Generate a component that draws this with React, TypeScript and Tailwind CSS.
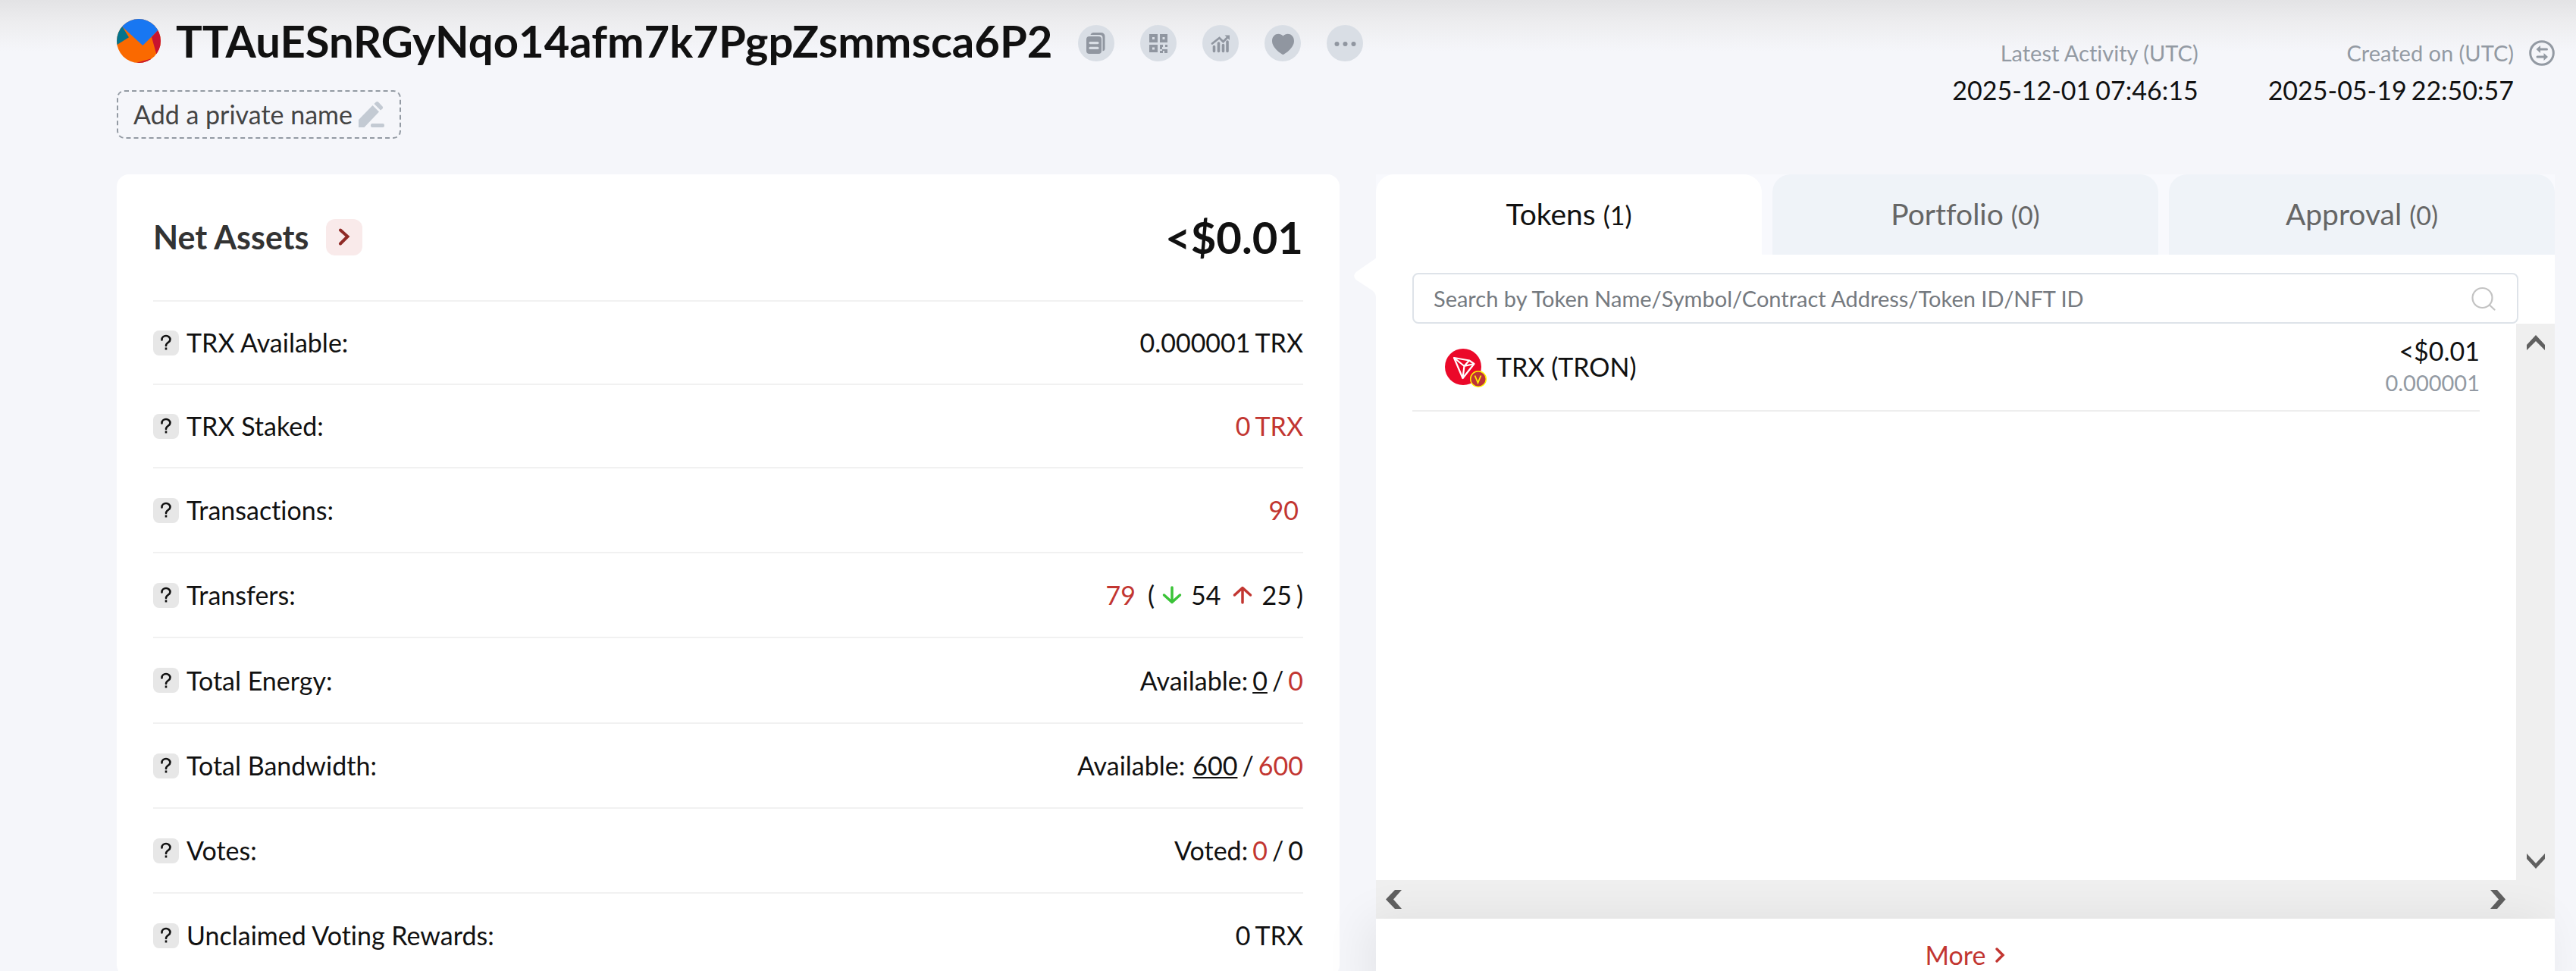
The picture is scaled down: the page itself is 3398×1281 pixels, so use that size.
import { useState } from 'react';
import type { ReactNode } from 'react';

const ADDRESS = 'TTAuESnRGyNqo14afm7k7PgpZsmmsca6P2';

const TABS = [
  { key: 'tokens', label: 'Tokens', count: 1 },
  { key: 'portfolio', label: 'Portfolio', count: 0 },
  { key: 'approval', label: 'Approval', count: 0 },
];

export default function App() {
  return (
    <div className="h-screen overflow-hidden bg-[#f5f6fa] bg-[linear-gradient(180deg,#e3e3e5_0px,#ededef_30px,#f5f6fa_68px)] pr-7 pl-[154px] font-['Lato',sans-serif] text-[34px] leading-[48px] text-[#111] [font-variant-ligatures:none]">
      <header className="flex h-[230px] items-start justify-between">
        <div className="pt-[25px]">
          <div className="flex h-[58px] items-center">
            <Avatar />
            <h1 className="ml-5 text-[58px] leading-[58px] font-bold">{ADDRESS}</h1>
            <div className="mt-1.5 ml-[34px] flex gap-[34px]">
              <IconButton label="Copy address"><CopyIcon /></IconButton>
              <IconButton label="QR code"><QrIcon /></IconButton>
              <IconButton label="Analysis"><ChartIcon /></IconButton>
              <IconButton label="Favorite"><HeartIcon /></IconButton>
              <IconButton label="More actions"><DotsIcon /></IconButton>
            </div>
          </div>
          <button
            type="button"
            className="mt-9 flex h-16 items-center gap-2 rounded-[10px] border-2 border-dashed border-[#939aa3] px-5 text-[#444]"
          >
            Add a private name
            <PencilIcon />
          </button>
        </div>

        <dl className="flex pt-[45px] text-right leading-[49px]">
          <div>
            <dt className="text-[29px] text-[#939aa3]">Latest Activity (UTC)</dt>
            <DateTime date="2025-12-01" time="07:46:15" />
          </div>
          <div className="ml-[92px]">
            <dt className="text-[29px] text-[#939aa3]">Created on (UTC)</dt>
            <DateTime date="2025-05-19" time="22:50:57" />
          </div>
          <dd className="ml-5 flex h-[49px] items-center">
            <button type="button" aria-label="Switch time zone">
              <SwapIcon />
            </button>
          </dd>
        </dl>
      </header>

      <main className="grid grid-cols-[1613fr_1555fr] items-start gap-12">
        <NetAssets />
        <TokenPanel />
      </main>
    </div>
  );
}

function DateTime({ date, time }: { date: string; time: string }) {
  return (
    <dd className="flex justify-end gap-1.5">
      <span>{date}</span>
      <span>{time}</span>
    </dd>
  );
}

function NetAssets() {
  return (
    <section className="rounded-2xl bg-white px-12">
      <div className="flex h-[166px] items-center justify-between">
        <div className="flex items-center">
          <h2 className="text-[43px] leading-[52px] font-bold text-[#333]">Net Assets</h2>
          <button
            type="button"
            aria-label="Show net assets"
            className="ml-[22px] grid size-12 place-items-center rounded-xl bg-[#f9eaea]"
          >
            <svg width="16" height="24" viewBox="0 0 16 24" fill="none" stroke="#8f2a26" strokeWidth="4" strokeLinecap="round">
              <path d="M3 2.500 12.500 11 3 20.500" />
            </svg>
          </button>
        </div>
        <span className="text-[58px] leading-[58px] font-bold">&lt;$0.01</span>
      </div>

      <Row label="TRX Available:" className="h-[110px]">
        <span>0.000001</span>
        <span>TRX</span>
      </Row>
      <Row label="TRX Staked:" className="h-[110px]">
        <a href="#" className="flex gap-1.5 text-[#c23631]">
          <span>0</span>
          <span>TRX</span>
        </a>
      </Row>
      <Row label="Transactions:" className="h-28">
        <Red>90</Red>
        <span />
      </Row>
      <Row label="Transfers:" className="h-28">
        <Red>79</Red>
        <span className="ml-2.5">(</span>
        <ArrowIcon className="ml-1 text-[#3bc338]" d="M13 2v19M2.500 12 13 21.500 23.500 12" />
        <span className="ml-1.5">54</span>
        <ArrowIcon className="ml-2.5 text-[#c23631]" d="M13 22V3M2.500 12 13 2.500 23.500 12" />
        <span className="ml-1.5">25</span>
        <span>)</span>
      </Row>
      <Row label="Total Energy:" className="h-[113px]">
        <span>Available:</span>
        <u className="decoration-2 underline-offset-2">0</u>
        <span>/</span>
        <Red>0</Red>
      </Row>
      <Row label="Total Bandwidth:" className="h-28">
        <span>Available:</span>
        <u className="ml-1 decoration-2 underline-offset-2">600</u>
        <span>/</span>
        <Red>600</Red>
      </Row>
      <Row label="Votes:" className="h-28">
        <span>Voted:</span>
        <Red>0</Red>
        <span>/</span>
        <span>0</span>
      </Row>
      <Row label="Unclaimed Voting Rewards:" className="h-28">
        <span>0</span>
        <span>TRX</span>
      </Row>
    </section>
  );
}

function Row({ label, className, children }: { label: string; className: string; children: ReactNode }) {
  return (
    <div className={`flex items-center justify-between border-t-2 border-[#f1f1f1] ${className}`}>
      <div className="flex items-center gap-2.5">
        <button
          type="button"
          aria-label={`About ${label}`}
          className="grid h-[33px] w-[34px] place-items-center rounded-lg bg-[#e7e7e7]"
        >
          <svg width="16" height="22" viewBox="0 0 16 22" fill="none" stroke="#111" strokeWidth="2.600">
            <path d="M2.500 7.500V7a5.500 5 0 0 1 11 0c0 4-5.500 3.500-5.500 8" strokeLinecap="round" />
            <path d="M8 17.500v3" />
          </svg>
        </button>
        <span>{label}</span>
      </div>
      <div className="flex items-center gap-1.5">{children}</div>
    </div>
  );
}

function Red({ children }: { children: ReactNode }) {
  return <a href="#" className="text-[#c23631]">{children}</a>;
}

function TokenPanel() {
  const [tab, setTab] = useState('tokens');

  return (
    <section className="relative">
      {/* pointer towards the net assets card */}
      <svg className="absolute top-[108px] -left-[29px]" width="30" height="64" viewBox="0 0 30 64" fill="#fff">
        <path d="M30 2 4 20c-5 4-5 8 0 12l20 13c4 3 5 6 5 10h1z" />
      </svg>

      <div role="tablist" className="flex h-[106px] gap-[14px] bg-[#f8f9fd]">
        {TABS.map((t) => (
          <button
            key={t.key}
            type="button"
            role="tab"
            aria-selected={tab === t.key}
            onClick={() => setTab(t.key)}
            className={
              tab === t.key
                ? 'flex-1 rounded-t-3xl bg-white text-[39px] text-[#111]'
                : 'flex-1 rounded-t-3xl bg-[#eff3f8] text-[39px] text-[#666]'
            }
          >
            {t.label} <span className="text-[34px]">({t.count})</span>
          </button>
        ))}
      </div>

      <div className="bg-white pt-6">
        <label className="mr-12 ml-12 flex h-[67px] items-center rounded-lg border-2 border-[#dee3e9] pr-7 pl-[26px]">
          <input
            type="text"
            aria-label="Search tokens"
            placeholder="Search by Token Name/Symbol/Contract Address/Token ID/NFT ID"
            className="w-full bg-transparent text-[29px] leading-10 outline-none placeholder:text-[#757a80]"
          />
          <SearchIcon />
        </label>

        {/* token list with its own scroll bars */}
        <div className="grid h-[785px] grid-cols-[1fr_51px] grid-rows-[1fr_51px]">
          <div className="pr-12 pl-12">
            <div className="flex h-[116px] items-center justify-between border-b-2 border-[#eee] pl-[43px]">
              <div className="flex items-center gap-5">
                <TrxLogo />
                <a href="#">TRX (TRON)</a>
              </div>
              <div className="text-right">
                <div className="leading-[42px]">&lt;$0.01</div>
                <div className="text-[29px] leading-[42px] text-[#939aa3]">0.000001</div>
              </div>
            </div>
          </div>
          <div className="flex flex-col items-center justify-between bg-[#efefef] py-3.5">
            <ScrollArrow label="Scroll up" d="M1 14 13 1l12 13v7L13 9 1 21z" />
            <ScrollArrow label="Scroll down" d="M1 4v7l12 13 12-13V4L13 17z" />
          </div>
          <div className="flex items-center justify-between bg-[#efefef] px-3">
            <ScrollArrow label="Scroll left" d="M13 0h9L11 12.500 22 25h-9L1 12.500z" />
            <ScrollArrow label="Scroll right" d="M13 0H4l11 12.500L4 25h9l11-12.500z" />
          </div>
          <div className="bg-[#efefef]" />
        </div>

        <div className="relative bg-white pt-6 pb-10 text-center shadow-[-12px_0_60px_rgba(0,0,0,0.07)]">
          <a href="#" className="inline-flex items-center gap-3 text-[#c23631]">
            More
            <svg width="14" height="22" viewBox="0 0 14 22" fill="none" stroke="currentColor" strokeWidth="3.500" strokeLinecap="round">
              <path d="M3 3l8 8-8 8" />
            </svg>
          </a>
        </div>
      </div>
    </section>
  );
}

function ScrollArrow({ label, d }: { label: string; d: string }) {
  return (
    <button type="button" aria-label={label}>
      <svg width="26" height="25" viewBox="0 0 26 25" fill="#606060">
        <path d={d} />
      </svg>
    </button>
  );
}

function IconButton({ label, children }: { label: string; children: ReactNode }) {
  return (
    <button type="button" aria-label={label} className="size-12 rounded-full bg-[#d9dee5] text-[#9096a0]">
      {children}
    </button>
  );
}

function Avatar() {
  return (
    <svg width="58" height="58" viewBox="0 0 58 58">
      <defs>
        <clipPath id="avatar">
          <circle cx="29" cy="29" r="29" />
        </clipPath>
      </defs>
      <g clipPath="url(#avatar)">
        <rect width="58" height="58" fill="#fa6900" />
        <path d="M0 0h58v11.500L34.300 35 7.700 10.700z" fill="#1877f2" />
        <path d="M0 0l7.700 10.700L16 24.300 0 34.300z" fill="#03738c" />
        <path d="M54.300 15 46 24l6 21.300L58 50V11z" fill="#c8142f" />
        <path d="M24 58.500 45 52.500V58z" fill="#c8142f" />
      </g>
    </svg>
  );
}

function PencilIcon() {
  return (
    <svg width="34" height="34" viewBox="0 0 34 34" fill="#c3cad3">
      <path d="M0 34V24L18.500 5l8.500 8.500L7.500 34z" />
      <path d="M20.500 3 23 .6q1.600-1.200 3 0l5.400 5.600q1.400 1.600 0 3.200L29 11.500z" />
      <rect x="16" y="29" width="18" height="5" rx="2" />
    </svg>
  );
}

function CopyIcon() {
  return (
    <svg width="48" height="48" viewBox="0 0 48 48" fill="currentColor">
      <path d="M16.500 13q1-3 4-3H30q5.500 0 5.500 5.500V31q0 3-3 3.500V17q0-4-4-4z" />
      <path
        fillRule="evenodd"
        d="M15 15h12q4 0 4 4v15q0 4-4 4H15q-4 0-4-4V19q0-4 4-4zm1 7a1.500 1.500 0 0 0 0 3.200h10a1.500 1.500 0 0 0 0-3.200zm0 6.800a1.500 1.500 0 0 0 0 3.200h10a1.500 1.500 0 0 0 0-3.200z"
      />
    </svg>
  );
}

function QrIcon() {
  return (
    <svg width="48" height="48" viewBox="0 0 48 48" fill="currentColor">
      <path
        fillRule="evenodd"
        d="M12 12h11v11H12zm4 4v3h3v-3zM26 12h10v11H26zm3.500 4v3h3v-3zM12 26h11v10H12zm4 3.500v3h3v-3z"
      />
      <path d="M26 26h4v3h3v-3h3v3h-3v3h3v5h-4v-3h-2v3h-4v-3h3v-2h-3zM30 29h-1v3h4v-3z" />
    </svg>
  );
}

function ChartIcon() {
  return (
    <svg width="48" height="48" viewBox="0 0 48 48" fill="none" stroke="currentColor" strokeLinecap="round">
      <path d="M15.500 28.500v6M21.500 24v10.500M27.500 26.500v8M33 22v12.500" strokeWidth="3.600" />
      <path d="M13 24.500l9.500-7.500 5 5 6.500-6.500" strokeWidth="2.800" />
      <path d="M29.500 13.500H36V20z" fill="currentColor" stroke="none" />
    </svg>
  );
}

function HeartIcon() {
  return (
    <svg width="48" height="48" viewBox="0 0 48 48" fill="currentColor">
      <path d="M24.500 39c-1 0-14.500-8-14.500-18 0-9 9.500-12 14.500-6.500C29.500 9 39 12 39 21c0 10-13.500 18-14.500 18z" />
    </svg>
  );
}

function DotsIcon() {
  return (
    <svg width="48" height="48" viewBox="0 0 48 48" fill="currentColor">
      <circle cx="13.500" cy="25" r="3" />
      <circle cx="24.500" cy="25" r="3" />
      <circle cx="35.500" cy="25" r="3" />
    </svg>
  );
}

function SwapIcon() {
  return (
    <svg width="34" height="34" viewBox="0 0 34 34" fill="#939aa3">
      <circle cx="17" cy="17" r="15.300" fill="none" stroke="#939aa3" strokeWidth="3" />
      <path d="M9.500 12 15 7v3.500h8.500a1.500 1.500 0 0 1 0 3H15V17z" />
      <path d="M25 22l-5.500-5v3.500H11a1.500 1.500 0 0 0 0 3h8.500V27z" />
    </svg>
  );
}

function SearchIcon() {
  return (
    <svg className="shrink-0" width="32" height="32" viewBox="0 0 32 32" fill="none" stroke="#c3c3c3" strokeWidth="2.200" strokeLinecap="round">
      <circle cx="14.500" cy="15" r="13" />
      <path d="M24 24.500l6.500 6" />
    </svg>
  );
}

function ArrowIcon({ d, className }: { d: string; className: string }) {
  return (
    <svg className={className} width="26" height="24" viewBox="0 0 26 24" fill="none" stroke="currentColor" strokeWidth="3.500" strokeLinecap="round" strokeLinejoin="round">
      <path d={d} />
    </svg>
  );
}

function TrxLogo() {
  return (
    <svg className="overflow-visible" width="48" height="48" viewBox="0 0 48 48">
      <circle cx="24" cy="24" r="24" fill="#eb0829" />
      <g fill="none" stroke="#fff" strokeWidth="2.200" strokeLinejoin="round">
        <path d="M12 12l20 3.500 6.500 4.500-15 19z" />
        <path d="M12 12l13.500 11L32 15.500M38.500 20l-13 3-2 16" />
      </g>
      <circle cx="44" cy="40" r="10.300" fill="#bd3338" stroke="#fff200" strokeWidth="1.500" />
      <path d="M39.500 35.500 43.500 45l4-9.500" fill="none" stroke="#fff200" strokeWidth="1.800" />
    </svg>
  );
}
